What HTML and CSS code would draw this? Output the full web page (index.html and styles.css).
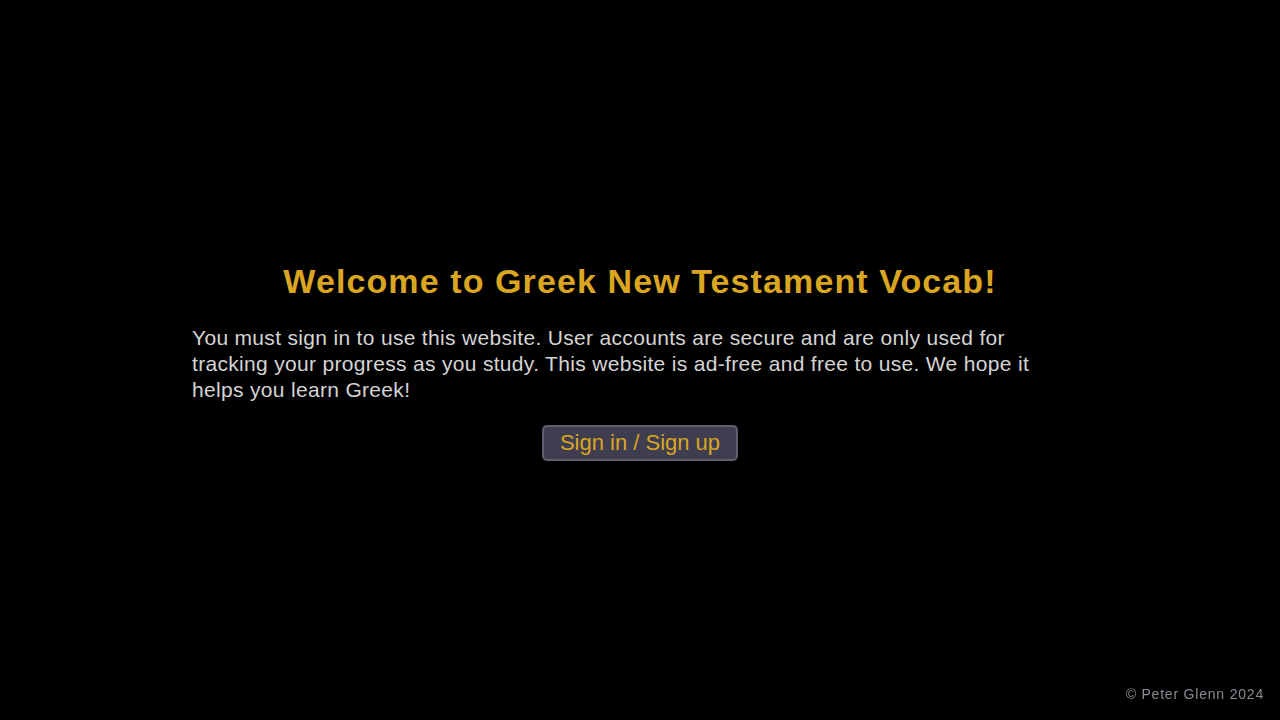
FILE: index.html
```html
<!DOCTYPE html>
<html lang="en">
<head>
<meta charset="utf-8">
<title>Greek New Testament Vocab</title>
<link rel="stylesheet" href="styles.css">
</head>
<body>
<main class="page">
  <section class="welcome">
    <h1 class="title">Welcome to Greek New Testament Vocab!</h1>
    <p class="intro">You must sign in to use this website. User accounts are secure and are only used for tracking your progress as you study. This website is ad-free and free to use. We hope it helps you learn Greek!</p>
    <button class="signin" type="button">Sign in / Sign up</button>
  </section>
</main>
<footer class="footer">© Peter Glenn 2024</footer>
</body>
</html>
```
FILE: styles.css
```css
html, body {
  margin: 0;
  padding: 0;
  height: 100%;
  background: #000;
  font-family: "Liberation Sans", Arial, Helvetica, sans-serif;
}
.page {
  height: 100%;
  display: flex;
  align-items: center;
  justify-content: center;
}
.welcome {
  width: 896px;
  display: flex;
  flex-direction: column;
  align-items: center;
}
.title {
  margin: 2px 0 24px;
  font-size: 34px;
  font-weight: bold;
  letter-spacing: 1.1px;
  color: #daa520;
  text-align: center;
  line-height: 40px;
}
.intro {
  margin: 0 0 22px;
  padding-right: 12px;
  align-self: stretch;
  font-size: 21px;
  letter-spacing: 0.32px;
  line-height: 26px;
  color: #d4d4d4;
}
.signin {
  font-family: inherit;
  font-size: 22px;
  color: #daa520;
  background: #3e3e50;
  border: 2px solid #5e5e70;
  border-radius: 5px;
  padding: 4px 16px;
  line-height: 24px;
}
.footer {
  position: fixed;
  right: 16px;
  bottom: 18px;
  font-size: 14px;
  letter-spacing: 0.8px;
  color: #8a8a94;
}
```
